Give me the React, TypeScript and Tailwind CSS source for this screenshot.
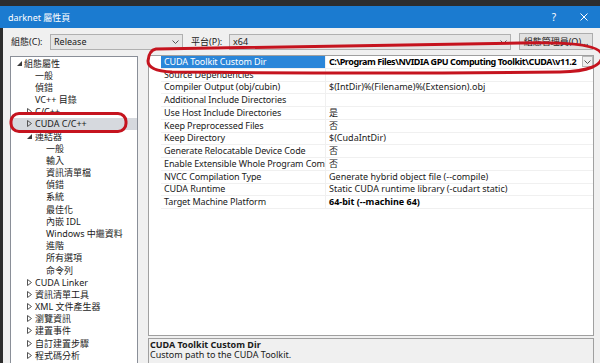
const font = "font-['Noto_Sans','Noto_Sans_CJK_TC',sans-serif]";

type TreeItem = { label: string; level: 0 | 1 | 2; arrow?: 'open' | 'closed'; active?: boolean };

const tree: TreeItem[] = [
  { label: '組態屬性', level: 0, arrow: 'open' },
  { label: '一般', level: 1 },
  { label: '偵錯', level: 1 },
  { label: 'VC++ 目錄', level: 1 },
  { label: 'C/C++', level: 1, arrow: 'closed' },
  { label: 'CUDA C/C++', level: 1, arrow: 'closed', active: true },
  { label: '連結器', level: 1, arrow: 'open' },
  { label: '一般', level: 2 },
  { label: '輸入', level: 2 },
  { label: '資訊清單檔', level: 2 },
  { label: '偵錯', level: 2 },
  { label: '系統', level: 2 },
  { label: '最佳化', level: 2 },
  { label: '內嵌 IDL', level: 2 },
  { label: 'Windows 中繼資料', level: 2 },
  { label: '進階', level: 2 },
  { label: '所有選項', level: 2 },
  { label: '命令列', level: 2 },
  { label: 'CUDA Linker', level: 1, arrow: 'closed' },
  { label: '資訊清單工具', level: 1, arrow: 'closed' },
  { label: 'XML 文件產生器', level: 1, arrow: 'closed' },
  { label: '瀏覽資訊', level: 1, arrow: 'closed' },
  { label: '建置事件', level: 1, arrow: 'closed' },
  { label: '自訂建置步驟', level: 1, arrow: 'closed' },
  { label: '程式碼分析', level: 1, arrow: 'closed' },
];

const props = [
  { name: 'CUDA Toolkit Custom Dir', value: 'C:\\Program Files\\NVIDIA GPU Computing Toolkit\\CUDA\\v11.2', bold: true, selected: true },
  { name: 'Source Dependencies', value: '' },
  { name: 'Compiler Output (obj/cubin)', value: '$(IntDir)%(Filename)%(Extension).obj' },
  { name: 'Additional Include Directories', value: '' },
  { name: 'Use Host Include Directories', value: '是' },
  { name: 'Keep Preprocessed Files', value: '否' },
  { name: 'Keep Directory', value: '$(CudaIntDir)' },
  { name: 'Generate Relocatable Device Code', value: '否' },
  { name: 'Enable Extensible Whole Program Compilation', value: '否' },
  { name: 'NVCC Compilation Type', value: 'Generate hybrid object file (--compile)' },
  { name: 'CUDA Runtime', value: 'Static CUDA runtime library (-cudart static)' },
  { name: 'Target Machine Platform', value: '64-bit (--machine 64)', bold: true },
];

const indent = { 0: 'pl-[6px]', 1: 'pl-[16px]', 2: 'pl-[27px]' };
const slot = { 0: 'w-[7px]', 1: 'w-[8px]', 2: 'w-[8px]' };

function Chevron() {
  return (
    <svg width="7" height="4" viewBox="0 0 7 4" className="shrink-0">
      <path d="M0.5 0.5 L3.5 3.5 L6.5 0.5" fill="none" stroke="#555" strokeWidth="1" />
    </svg>
  );
}

function Arrow({ kind }: { kind: 'open' | 'closed' }) {
  if (kind === 'open') {
    return (
      <svg width="5" height="5" viewBox="0 0 5 5">
        <path d="M5 0 L5 5 L0 5 Z" fill="#3a3a3a" />
      </svg>
    );
  }
  return (
    <svg width="5" height="7" viewBox="0 0 5 7">
      <path d="M0.5 0.5 L4.5 3.5 L0.5 6.5 Z" fill="none" stroke="#555" strokeWidth="1" />
    </svg>
  );
}

export default function App() {
  return (
    <div className={`relative w-[600px] h-[363px] overflow-hidden bg-[#2d2d2d] text-[9px] text-[#1a1a1a] ${font}`}>
      {/* Title bar */}
      <div className="mt-[6px] h-[22px] bg-[#1b7bd0] flex items-center pl-[8px] text-white">
        <span className="text-[9px] leading-none">darknet 屬性頁</span>
        <span className="ml-auto mr-[24px] text-[10px] leading-none">?</span>
        <svg width="8" height="8" viewBox="0 0 8 8" className="mr-[12px]">
          <path d="M0.5 0.5 L7.5 7.5 M7.5 0.5 L0.5 7.5" stroke="#fff" strokeWidth="1" />
        </svg>
      </div>

      <div className="flex h-full">
        <div className="w-[3px] shrink-0" />
        <div className="flex-1 bg-[#f0f0f0]">
          {/* Configuration row */}
          <div className="mt-[5px] h-[17px] flex items-center">
            <span className="ml-[8px] w-[39px]">組態(C):</span>
            <div className="w-[133px] h-[16px] border border-[#b0b0b0] bg-[#e6e6e6] flex items-center pl-[3px] pr-[3px]">
              <span className="flex-1">Release</span>
              <Chevron />
            </div>
            <span className="ml-[8px] w-[38px]">平台(P):</span>
            <div className="w-[282px] h-[16px] border border-[#b0b0b0] bg-[#e6e6e6] flex items-center pl-[3px] pr-[3px]">
              <span className="flex-1">x64</span>
              <Chevron />
            </div>
            <div className="ml-[8px] w-[74px] h-[17px] border border-[#adadad] bg-[#e1e1e1] flex items-center justify-center">
              組態管理員(O)...
            </div>
          </div>

          {/* Main area */}
          <div className="mt-[5px] flex pl-[7px] gap-[10px]">
            {/* Tree */}
            <div className="mt-[1px] w-[128px] h-[320px] border border-[#8a8f98] bg-white">
              {tree.map((t, i) => (
                <div
                  key={i}
                  className={`h-[12.18px] flex items-center leading-none whitespace-nowrap ${indent[t.level]} ${t.active ? 'bg-[#d6d9de]' : ''}`}
                >
                  <span className={`${slot[t.level]} flex items-center shrink-0`}>{t.arrow && <Arrow kind={t.arrow} />}</span>
                  <span>{t.label}</span>
                </div>
              ))}
            </div>

            {/* Property grid + description */}
            <div className="w-[446px] flex flex-col gap-[2px]">
              <div className="h-[281px] border border-[#a0a0a0] bg-white flex">
                <div className="w-[12px] shrink-0" />
                <div className="flex-1">
                  {props.map((p, i) => (
                    <div key={i} className="h-[12.75px] flex border-b border-[#f0f0f0] leading-[12px]">
                      <div
                        className={`w-[165px] shrink-0 flex items-center pl-[3px] overflow-hidden whitespace-nowrap border-r border-[#f0f0f0] tracking-[-0.1px] ${p.selected ? 'bg-[#2b86d9] text-white' : ''}`}
                      >
                        {p.name}
                      </div>
                      <div className={`flex-1 min-w-0 flex items-center pl-[3px] whitespace-nowrap ${p.bold ? 'font-bold text-black' : ''}`}>
                        <span className={`flex-1 min-w-0 ${p.selected ? 'tracking-[-0.45px]' : ''}`}>{p.value}</span>
                        {p.selected && (
                          <span className="w-[11px] h-[11px] shrink-0 border border-[#b8b8b8] bg-[#f0f0f0] flex items-center justify-center">
                            <Chevron />
                          </span>
                        )}
                      </div>
                    </div>
                  ))}
                </div>
              </div>
              <div className="h-[40px] border border-[#a0a0a0] bg-[#f0f0f0] pl-[1px] pt-[1px] leading-[10px]">
                <div className="font-bold">CUDA Toolkit Custom Dir</div>
                <div>Custom path to the CUDA Toolkit.</div>
              </div>
            </div>
          </div>
        </div>
      </div>

      {/* Red annotation marks */}
      <svg className="absolute inset-0 pointer-events-none" width="600" height="363" viewBox="0 0 600 363">
        <path
          d="M156 49 Q300 46 520 43 Q600 41 602 55 Q603 71 560 72 Q380 74 172 72 Q148 71 148 61 Q149 50 156 49 Z"
          fill="none"
          stroke="#c5141f"
          strokeWidth="3"
        />
        <rect x="11" y="113.5" width="115" height="18" rx="8" fill="none" stroke="#c5141f" strokeWidth="3" />
      </svg>
    </div>
  );
}
